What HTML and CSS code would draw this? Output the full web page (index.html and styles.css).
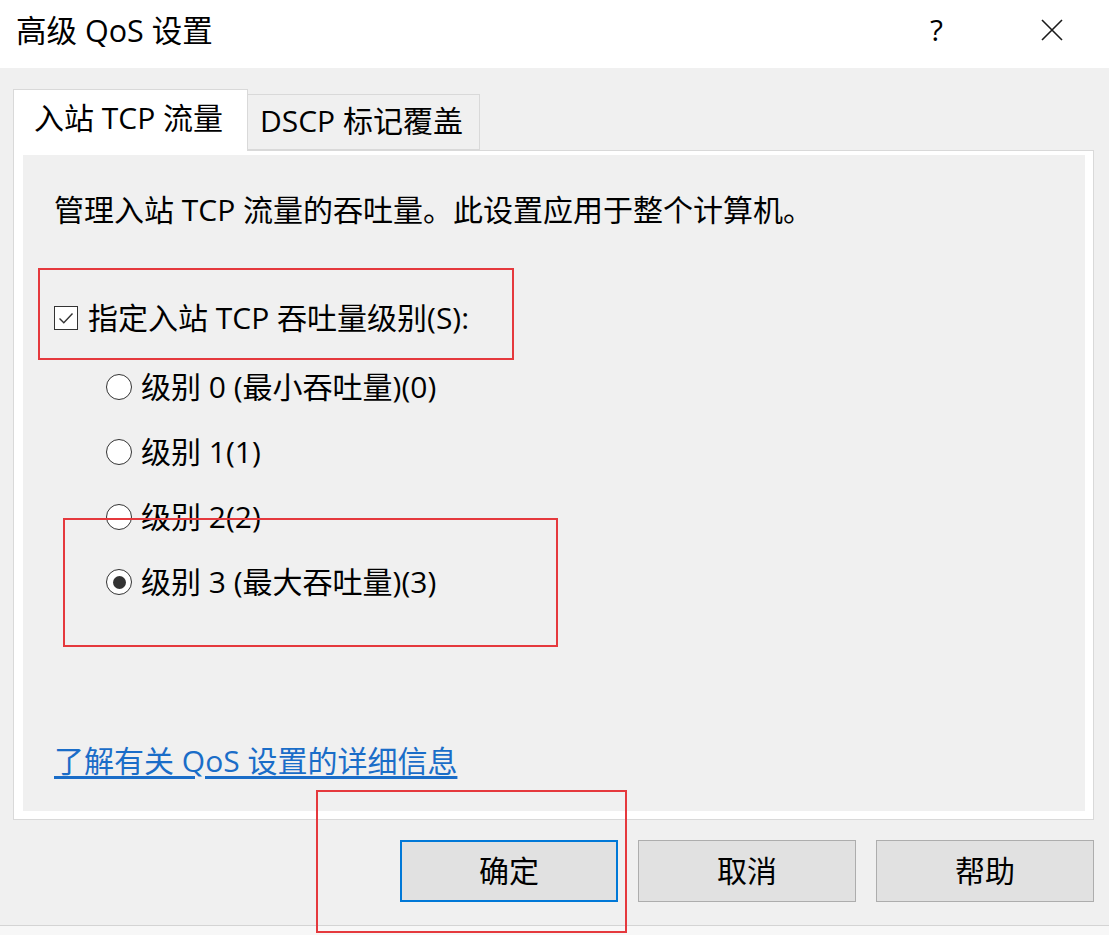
FILE: index.html
```html
<!DOCTYPE html>
<html lang="zh-CN">
<head>
<meta charset="utf-8">
<title>高级 QoS 设置</title>
<link rel="stylesheet" href="styles.css">
</head>
<body>
<div class="window">
  <div class="titlebar">
    <div class="title">高级 QoS 设置</div>
    <div class="help">?</div>
    <div class="close">
      <svg width="22" height="22" viewBox="0 0 22 22"><path d="M1 1 L21 21 M21 1 L1 21" stroke="#1a1a1a" stroke-width="1.6" fill="none"/></svg>
    </div>
  </div>
  <div class="body">
    <div class="tabs">
      <div class="tab active">入站 TCP 流量</div>
      <div class="tab">DSCP 标记覆盖</div>
    </div>
    <div class="panel">
      <div class="page">
        <p class="desc">管理入站 TCP 流量的吞吐量。此设置应用于整个计算机。</p>
        <div class="check-row">
          <span class="checkbox">
            <svg width="22" height="22" viewBox="0 0 22 22"><path d="M4.5 11.5 L8.8 15.8 L17.5 6.5" stroke="#333" stroke-width="1.4" fill="none"/></svg>
          </span>
          <span class="label">指定入站 TCP 吞吐量级别(S):</span>
        </div>
        <div class="radios">
          <div class="radio-row"><span class="radio"></span><span class="label">级别 0 (最小吞吐量)(0)</span></div>
          <div class="radio-row"><span class="radio"></span><span class="label">级别 1(1)</span></div>
          <div class="radio-row"><span class="radio"></span><span class="label">级别 2(2)</span></div>
          <div class="radio-row"><span class="radio checked"></span><span class="label">级别 3 (最大吞吐量)(3)</span></div>
        </div>
        <a class="link" href="#">了解有关 QoS 设置的详细信息</a>
      </div>
    </div>
    <div class="buttons">
      <div class="btn primary">确定</div>
      <div class="btn">取消</div>
      <div class="btn">帮助</div>
    </div>
  </div>
  <div class="bottom-edge"></div>
</div>
<div class="mark mark-1"></div>
<div class="mark mark-2"></div>
<div class="mark mark-3"></div>
</body>
</html>
```

FILE: styles.css
```css
html, body {
  margin: 0;
  padding: 0;
}
body {
  width: 1109px;
  height: 935px;
  overflow: hidden;
  background: #f0f0f0;
  font-family: "Open Sans", "Noto Sans CJK SC", sans-serif;
  color: #000;
  position: relative;
}
.window {
  display: flex;
  flex-direction: column;
  height: 935px;
}
.titlebar {
  height: 68px;
  background: #ffffff;
  display: flex;
  align-items: center;
  flex-shrink: 0;
}
.title {
  font-size: 30.5px;
  line-height: 40px;
  padding-left: 16px;
  margin-top: -8px;
  flex: 1;
}
.help {
  font-size: 30px;
  line-height: 40px;
  width: 20px;
  margin-top: -8px;
  margin-right: 91px;
}
.close {
  width: 22px;
  height: 22px;
  margin-right: 46px;
  margin-top: -8px;
}
.close svg { display: block; }
.body {
  flex: 1;
  padding: 21px 15px 0 13px;
  display: flex;
  flex-direction: column;
}
.tabs {
  display: flex;
  align-items: flex-end;
  height: 62px;
  position: relative;
  z-index: 1;
  margin-bottom: -1px;
}
.tab {
  font-size: 30px;
  line-height: 40px;
  box-sizing: border-box;
  white-space: nowrap;
}
.tab.active {
  background: #ffffff;
  border: 1px solid #d9d9d9;
  border-bottom: none;
  height: 62px;
  width: 235px;
  padding: 8px 0 0 20px;
}
.tab:not(.active) {
  background: #f0f0f0;
  border: 1px solid #d9d9d9;
  border-left: none;
  height: 56px;
  width: 232px;
  padding: 6px 0 0 12px;
  margin-bottom: 1px;
}
.panel {
  width: 1081px;
  height: 670px;
  box-sizing: border-box;
  background: #ffffff;
  border: 1px solid #d9d9d9;
  padding: 4px 8px 8px 9px;
}
.page {
  height: 100%;
  background: #f0f0f0;
  box-sizing: border-box;
  padding: 35px 0 30px 31px;
  display: flex;
  flex-direction: column;
  align-items: flex-start;
}
.desc {
  margin: 0;
  font-size: 30px;
  line-height: 40px;
}
.check-row {
  display: flex;
  align-items: center;
  margin-top: 68px;
  height: 40px;
}
.checkbox {
  width: 24px;
  height: 24px;
  box-sizing: border-box;
  border: 1.5px solid #333;
  background: #fff;
  display: flex;
  align-items: center;
  justify-content: center;
  margin-right: 10px;
}
.checkbox svg { display: block; }
.label {
  font-size: 30px;
  line-height: 40px;
  white-space: nowrap;
}
.radios {
  margin-top: 29px;
  margin-left: 52px;
  display: flex;
  flex-direction: column;
  gap: 25px;
}
.radio-row {
  display: flex;
  align-items: center;
  height: 40px;
}
.radio {
  width: 26px;
  height: 26px;
  box-sizing: border-box;
  border: 1.5px solid #333;
  border-radius: 50%;
  background: #fff;
  margin-right: 9px;
  display: flex;
  align-items: center;
  justify-content: center;
}
.radio.checked::after {
  content: "";
  width: 13px;
  height: 13px;
  border-radius: 50%;
  background: #333;
}
.link {
  margin-top: auto;
  font-size: 30px;
  line-height: 40px;
  color: #1a6dc8;
  text-decoration: underline;
  text-underline-offset: 4px;
}
.buttons {
  display: flex;
  justify-content: flex-end;
  gap: 20px;
  margin-top: 20px;
}
.btn {
  width: 218px;
  height: 62px;
  box-sizing: border-box;
  background: #e1e1e1;
  border: 1px solid #adadad;
  font-size: 30px;
  line-height: 60px;
  text-align: center;
}
.btn.primary {
  border: 2px solid #0078d7;
  line-height: 58px;
}
.bottom-edge {
  height: 9px;
  border-top: 1px solid #d4d4d4;
  background: #f7f7f7;
}
.mark {
  position: absolute;
  border: 2px solid #e5393d;
  box-sizing: border-box;
}
.mark-1 { left: 38px; top: 268px; width: 476px; height: 92px; }
.mark-2 { left: 63px; top: 518px; width: 495px; height: 129px; }
.mark-3 { left: 316px; top: 790px; width: 311px; height: 143px; }
```
